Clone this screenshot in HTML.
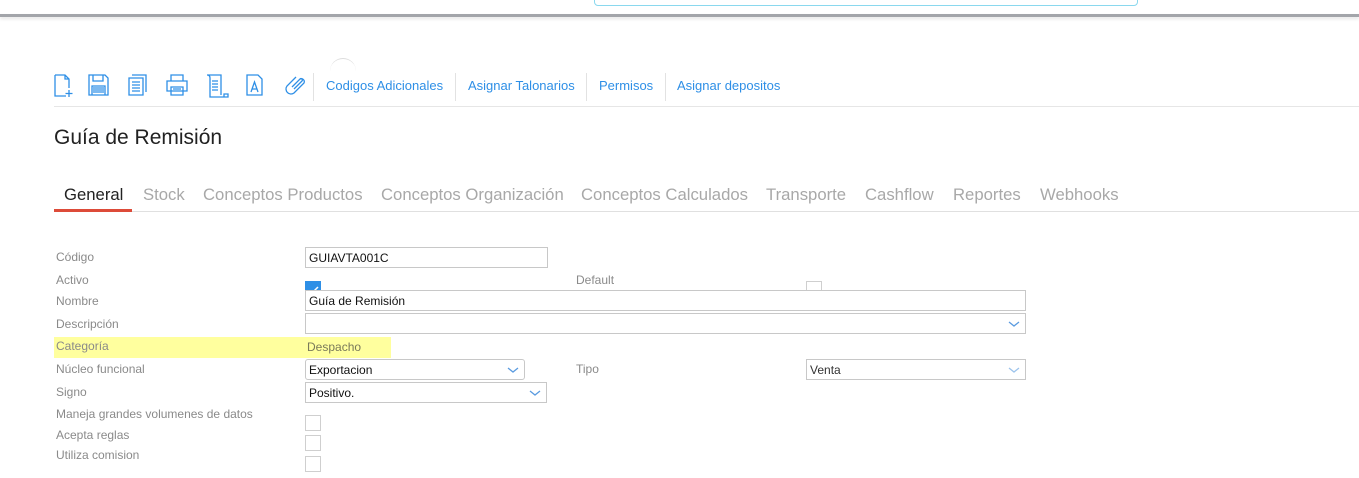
<!DOCTYPE html>
<html><head><meta charset="utf-8"><style>
*{box-sizing:border-box;margin:0;padding:0}
body{width:1359px;height:478px;background:#fff;position:relative;overflow:hidden;font-family:"Liberation Sans",sans-serif}
.a{position:absolute}
.lbl{position:absolute;left:56px;font-size:12px;color:#8a8a8a}
.inp{position:absolute;border:1px solid #c8c8c8;background:#fff;font-size:12px;color:#111;padding:3px 0 0 3px;height:21px}
.chev{position:absolute;right:5px;top:6px;width:12px;height:8px}
.cb{position:absolute;left:305px;width:16px;height:16px;border:1px solid #cfcfcf;background:#fff}
.tab{position:absolute;top:185px;font-size:16.7px;color:#a8a8a8}
.lnk{position:absolute;top:78px;font-size:13px;color:#2e8fe6}
.sep{position:absolute;top:73px;width:1px;height:28px;background:#e2e2e2}
svg.i{position:absolute;top:74px}
</style></head><body>
<div class="a" style="left:594px;top:-10px;width:544px;height:16px;border:1px solid #8ad8ee;border-radius:4px"></div>
<div class="a" style="left:0;top:14px;width:1359px;height:3px;background:#a3a5aa;box-shadow:0 2px 3px #e4e4e4"></div>
<div class="a" style="left:330px;top:58px;width:26px;height:26px;border-radius:50%;border-top:1px solid #ddd"></div>

<svg class="i" style="left:54px" width="22" height="24" viewBox="0 0 22 24" fill="none" stroke="#2e8fe6" stroke-width="1.3"><path d="M1 1h10l4 4v9M1 1v21h11M11 1v4h4M15 16v7M11.5 19.5h7"/></svg>
<svg class="i" style="left:88px" width="21" height="22" viewBox="0 0 21 22" fill="none" stroke="#2e8fe6" stroke-width="1.3"><path d="M1 1h16l3 3v17H1z M5 1v6h10V1 M4 12h13v9H4z M5 14h11M5 16h11M5 18h11"/></svg>
<svg class="i" style="left:128px" width="19" height="22" viewBox="0 0 19 22" fill="none" stroke="#2e8fe6" stroke-width="1.3"><path d="M4 1h14v17M1 4h14v17H1z M4 8h8M4 11h8M4 14h8M4 17h8"/></svg>
<svg class="i" style="left:166px" width="22" height="22" viewBox="0 0 22 22" fill="none" stroke="#2e8fe6" stroke-width="1.3"><path d="M5 7V1h12v6M1 7h20v10H1z M5 13h12v8H5z M7 15h8M7 17h8"/></svg>
<svg class="i" style="left:206px" width="23" height="24" viewBox="0 0 23 24" fill="none" stroke="#2e8fe6" stroke-width="1.3"><path d="M1 1h14v20M1 1c2 0 3 1 3 3v19h14v-3h4v3H18M6 7h6M6 10h6M6 13h6M6 16h6"/></svg>
<svg class="i" style="left:246px" width="18" height="22" viewBox="0 0 18 22" fill="none" stroke="#2e8fe6" stroke-width="1.3"><path d="M1 1h11l4 4v16H1z M5 18l3.5-10 3.5 10M6 15h5"/></svg>
<svg class="i" style="left:285px" width="22" height="22" viewBox="0 0 22 22" fill="none" stroke="#2e8fe6" stroke-width="1.3"><path d="M7 13l8-8a3 3 0 014 4L9 19a5 5 0 01-7-7l9-9M9 15l8-8a1.4 1.4 0 00-2-2"/></svg>
<div class="sep" style="left:313px"></div>
<div class="lnk" style="left:326px">Codigos Adicionales</div>
<div class="sep" style="left:455px"></div>
<div class="lnk" style="left:468px">Asignar Talonarios</div>
<div class="sep" style="left:586px"></div>
<div class="lnk" style="left:599px">Permisos</div>
<div class="sep" style="left:665px"></div>
<div class="lnk" style="left:677px">Asignar depositos</div>
<div class="a" style="left:54px;top:106px;width:1305px;height:1px;background:#e6e6e6"></div>

<div class="a" style="left:54px;top:126px;font-size:21px;color:#222">Guía de Remisión</div>

<div class="tab" style="left:64px;color:#222">General</div>
<div class="tab" style="left:143px">Stock</div>
<div class="tab" style="left:203px">Conceptos Productos</div>
<div class="tab" style="left:381px">Conceptos Organización</div>
<div class="tab" style="left:581px">Conceptos Calculados</div>
<div class="tab" style="left:766px">Transporte</div>
<div class="tab" style="left:865px">Cashflow</div>
<div class="tab" style="left:953px">Reportes</div>
<div class="tab" style="left:1040px">Webhooks</div>
<div class="a" style="left:54px;top:211px;width:1305px;height:1px;background:#e0e0e0"></div>
<div class="a" style="left:54px;top:209px;width:78px;height:3px;background:#dd4b39"></div>

<div class="a" style="left:54px;top:337px;width:337px;height:21px;background:#ffff9e"></div>

<div class="lbl" style="top:250px">Código</div>
<div class="lbl" style="top:273px">Activo</div>
<div class="lbl" style="top:294px">Nombre</div>
<div class="lbl" style="top:317px">Descripción</div>
<div class="lbl" style="top:339px">Categoría</div>
<div class="lbl" style="top:362px">Núcleo funcional</div>
<div class="lbl" style="top:385px">Signo</div>
<div class="lbl" style="top:407px">Maneja grandes volumenes de datos</div>
<div class="lbl" style="top:428px">Acepta reglas</div>
<div class="lbl" style="top:448px">Utiliza comision</div>
<div class="lbl" style="left:576px;top:273px">Default</div>
<div class="lbl" style="left:576px;top:362px">Tipo</div>

<div class="inp" style="left:305px;top:247px;width:243px">GUIAVTA001C</div>
<div class="a" style="left:305px;top:281px;width:16px;height:10px;background:#2e8fe6"><svg width="16" height="10"><path d="M3 8l3 2 7-7" stroke="#fff" stroke-width="1.5" fill="none"/></svg></div>
<div class="a" style="left:806px;top:281px;width:16px;height:10px;border:1px solid #cfcfcf"></div>
<div class="inp" style="left:305px;top:290px;width:721px">Guía de Remisión</div>
<div class="inp" style="left:305px;top:313px;width:721px"><svg class="chev" viewBox="0 0 12 8"><path d="M1 2l5 4 5-4" stroke="#5a9be0" stroke-width="1.3" fill="none"/></svg></div>
<div class="a" style="left:307px;top:340px;font-size:12px;color:#7a7a5a">Despacho</div>
<div class="inp" style="left:305px;top:359px;width:220px;border-radius:3px">Exportacion<svg class="chev" viewBox="0 0 12 8"><path d="M1 2l5 4 5-4" stroke="#5a9be0" stroke-width="1.3" fill="none"/></svg></div>
<div class="inp" style="left:806px;top:359px;width:220px;color:#333">Venta<svg class="chev" viewBox="0 0 12 8"><path d="M1 2l5 4 5-4" stroke="#9cc3ec" stroke-width="1.3" fill="none"/></svg></div>
<div class="inp" style="left:305px;top:382px;width:242px">Positivo.<svg class="chev" viewBox="0 0 12 8"><path d="M1 2l5 4 5-4" stroke="#5a9be0" stroke-width="1.3" fill="none"/></svg></div>
<div class="cb" style="top:415px"></div>
<div class="cb" style="top:435px"></div>
<div class="cb" style="top:456px"></div>
</body></html>
